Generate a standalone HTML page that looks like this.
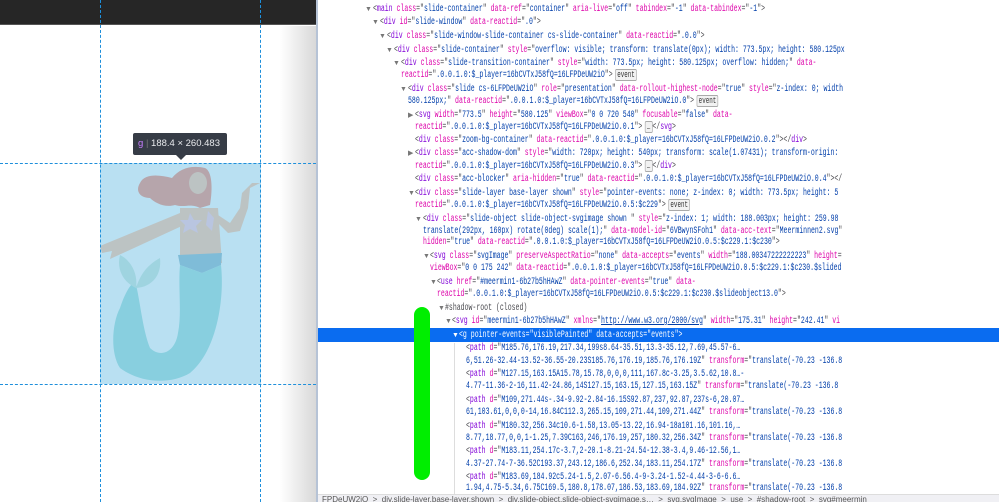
<!DOCTYPE html>
<html><head><meta charset="utf-8"><style>
*{margin:0;padding:0;box-sizing:border-box}
body{width:999px;height:502px;overflow:hidden;background:#fff;position:relative;font-family:"Liberation Sans",sans-serif}
#left{position:absolute;left:0;top:0;width:316px;height:502px;background:#fff;overflow:hidden}
#top{position:absolute;left:0;top:0;width:316px;height:25px;background:#262626;border-bottom:1px solid #555}
#grad{position:absolute;left:280px;top:26px;width:36px;height:476px;background:linear-gradient(to right,rgba(255,255,255,0),#d8d8d8)}
.vd{position:absolute;top:0;width:0;height:502px;border-left:1px dashed #1e8fdb}
.hd{position:absolute;left:0;width:316px;height:0;border-top:1px dashed #1e8fdb}
#box{position:absolute;left:100px;top:163px;width:161px;height:221px;background:#b9e0f2}
#tip{position:absolute;left:133px;top:133px;width:94px;height:22px;background:#363c46;border-radius:2px;color:#e8eaed;font-size:9.5px;line-height:22px;padding-left:5px;white-space:nowrap}
#tip:after{content:"";position:absolute;left:43px;top:22px;border:5px solid transparent;border-top-color:#363c46}
#sep{position:absolute;left:316px;top:0;width:2px;height:502px;background:#b6c3d6}
#right{position:absolute;left:318px;top:0;width:681px;height:494px;overflow:hidden;background:#fff}
#hl{position:absolute;left:0;top:328px;width:681px;height:14px;background:#0a6cf0}
#guide{position:absolute;left:136px;top:343px;width:1px;height:151px;background:#ddd}
#green{position:absolute;left:96px;top:307px;width:16px;height:173px;background:#00ee00;border-radius:8px}
.l{position:absolute;white-space:pre;font-family:"Liberation Mono",monospace;font-size:10px;line-height:13px;height:13px;transform:scaleX(0.653);transform-origin:0 0;color:#4a4a4f}
.t{color:#8000d7}.a{color:#dd00a9}.v{color:#003eaa}
.ar{position:absolute;font-size:7px;color:#777;line-height:13px}
.ev{display:inline-block;border:1px solid #aaa;border-radius:2px;background:#f2f2f2;color:#333;font-size:9px;line-height:10px;padding:0 2px;margin-left:4px}
.hl{color:#fff}.hl .t,.hl .a,.hl .v{color:#fff}
#bot{position:absolute;left:318px;top:494px;width:681px;height:8px;background:#f0f0f4;border-top:1px solid #ddd;font-size:8px;color:#555;white-space:pre;overflow:hidden;line-height:10px;padding-left:4px}
</style></head><body>
<div id="left">
<div id="top"></div>
<div id="grad"></div>
<div id="box"></div>
<svg style="position:absolute;left:100px;top:163px" width="161" height="221" viewBox="0 0 161 221">
<path d="M80 50 L0 83 L2 90 L12 88 L10 96 L84 62Z" fill="#bcc3c3"/>
<path d="M112 48 L130 60 L140 45 L142 30 L152 20 L160 20 L150 25 L148 45 L140 68 L128 70 L118 60Z" fill="#bcc3c3"/>
<path d="M80 45 L118 45 L122 100 L80 100Z" fill="#bcc3c3"/>
<path d="M40 20 C45 10 60 12 72 15 C80 5 92 2 105 5 C112 8 113 25 110 42 L100 45 C90 40 85 45 75 42 C65 45 55 40 50 35 C40 35 35 28 40 20Z" fill="#b6a5ab"/>
<ellipse cx="98" cy="20" rx="9" ry="11" fill="#bcc3c3"/>
<path d="M90 50 L94 57 L102 57 L96 63 L98 70 L90 66 L83 70 L85 62 L80 57 L88 57Z" fill="#b9c5e0"/>
<path d="M108 48 L114 55 L112 68 L106 62Z" fill="#b9c5e0"/>
<path d="M78 92 L122 90 L121 102 L102 110 L80 102Z" fill="#7fbcd8"/>
<path d="M80 102 L102 110 L121 102 C125 140 115 190 90 210 C70 222 40 220 20 205 C10 190 12 160 20 145 C25 130 30 122 35 118 C40 135 42 165 50 185 C60 195 75 190 78 170 C82 150 78 125 80 102Z" fill="#88cfdf"/>
<path d="M20 92 C32 98 38 112 36 125 C25 120 16 108 20 92Z" fill="#9fd4e0"/>
<path d="M60 95 C62 112 52 124 36 125 C40 112 47 102 60 95Z" fill="#9fd4e0"/>
</svg>
<div class="vd" style="left:100px"></div>
<div class="vd" style="left:260px"></div>
<div class="hd" style="top:163px"></div>
<div class="hd" style="top:384px"></div>
<div id="tip"><span style="color:#c77dff">g</span> <span style="color:#777">|</span> 188.4 × 260.483</div>
</div>
<div id="sep"></div>
<div id="right">
<div id="hl"></div>
<div id="guide"></div>
<span class="ar" style="left:47px;top:3px">▼</span>
<div class="l" style="left:55px;top:3px">&lt;<span class="t">main</span> <span class="a">class</span>="<span class="v">slide-container</span>" <span class="a">data-ref</span>="<span class="v">container</span>" <span class="a">aria-live</span>="<span class="v">off</span>" <span class="a">tabindex</span>="<span class="v">-1</span>" <span class="a">data-tabindex</span>="<span class="v">-1</span>"&gt;</div>
<span class="ar" style="left:54px;top:16px">▼</span>
<div class="l" style="left:62px;top:16px">&lt;<span class="t">div</span> <span class="a">id</span>="<span class="v">slide-window</span>" <span class="a">data-reactid</span>="<span class="v">.0</span>"&gt;</div>
<span class="ar" style="left:61px;top:30px">▼</span>
<div class="l" style="left:69px;top:30px">&lt;<span class="t">div</span> <span class="a">class</span>="<span class="v">slide-window-slide-container cs-slide-container</span>" <span class="a">data-reactid</span>="<span class="v">.0.0</span>"&gt;</div>
<span class="ar" style="left:68px;top:44px">▼</span>
<div class="l" style="left:76px;top:44px">&lt;<span class="t">div</span> <span class="a">class</span>="<span class="v">slide-container</span>" <span class="a">style</span>="<span class="v">overflow: visible; transform: translate(0px); width: 773.5px; height: 580.125px</span></div>
<span class="ar" style="left:75px;top:57px">▼</span>
<div class="l" style="left:83px;top:57px">&lt;<span class="t">div</span> <span class="a">class</span>="<span class="v">slide-transition-container</span>" <span class="a">style</span>="<span class="v">width: 773.5px; height: 580.125px; overflow: hidden;</span>" <span class="a">data-</span></div>
<div class="l" style="left:83px;top:69px"><span class="a">reactid</span>="<span class="v">.0.0.1.0:$_player=16bCVTxJ58fQ=16LFPDeUW2iO</span>"&gt;<span class="ev">event</span></div>
<span class="ar" style="left:82px;top:83px">▼</span>
<div class="l" style="left:90px;top:83px">&lt;<span class="t">div</span> <span class="a">class</span>="<span class="v">slide cs-6LFPDeUW2iO</span>" <span class="a">role</span>="<span class="v">presentation</span>" <span class="a">data-rollout-highest-node</span>="<span class="v">true</span>" <span class="a">style</span>="<span class="v">z-index: 0; width</span></div>
<div class="l" style="left:90px;top:95px"><span class="v">580.125px;</span>" <span class="a">data-reactid</span>="<span class="v">.0.0.1.0:$_player=16bCVTxJ58fQ=16LFPDeUW2iO.0</span>"&gt;<span class="ev">event</span></div>
<span class="ar" style="left:90px;top:109px">▶</span>
<div class="l" style="left:97px;top:109px">&lt;<span class="t">svg</span> <span class="a">width</span>="<span class="v">773.5</span>" <span class="a">height</span>="<span class="v">580.125</span>" <span class="a">viewBox</span>="<span class="v">0 0 720 540</span>" <span class="a">focusable</span>="<span class="v">false</span>" <span class="a">data-</span></div>
<div class="l" style="left:97px;top:121px"><span class="a">reactid</span>="<span class="v">.0.0.1.0:$_player=16bCVTxJ58fQ=16LFPDeUW2iO.0.1</span>"&gt;<span class="ev">…</span>&lt;/<span class="t">svg</span>&gt;</div>
<div class="l" style="left:97px;top:134px">&lt;<span class="t">div</span> <span class="a">class</span>="<span class="v">zoom-bg-container</span>" <span class="a">data-reactid</span>="<span class="v">.0.0.1.0:$_player=16bCVTxJ58fQ=16LFPDeUW2iO.0.2</span>"&gt;&lt;/<span class="t">div</span>&gt;</div>
<span class="ar" style="left:90px;top:147px">▶</span>
<div class="l" style="left:97px;top:147px">&lt;<span class="t">div</span> <span class="a">class</span>="<span class="v">acc-shadow-dom</span>" <span class="a">style</span>="<span class="v">width: 720px; height: 540px; transform: scale(1.07431); transform-origin:</span></div>
<div class="l" style="left:97px;top:160px"><span class="a">reactid</span>="<span class="v">.0.0.1.0:$_player=16bCVTxJ58fQ=16LFPDeUW2iO.0.3</span>"&gt;<span class="ev">…</span>&lt;/<span class="t">div</span>&gt;</div>
<div class="l" style="left:97px;top:173px">&lt;<span class="t">div</span> <span class="a">class</span>="<span class="v">acc-blocker</span>" <span class="a">aria-hidden</span>="<span class="v">true</span>" <span class="a">data-reactid</span>="<span class="v">.0.0.1.0:$_player=16bCVTxJ58fQ=16LFPDeUW2iO.0.4</span>"&gt;&lt;/</div>
<span class="ar" style="left:90px;top:187px">▼</span>
<div class="l" style="left:97px;top:187px">&lt;<span class="t">div</span> <span class="a">class</span>="<span class="v">slide-layer base-layer shown</span>" <span class="a">style</span>="<span class="v">pointer-events: none; z-index: 0; width: 773.5px; height: 5</span></div>
<div class="l" style="left:97px;top:199px"><span class="a">reactid</span>="<span class="v">.0.0.1.0:$_player=16bCVTxJ58fQ=16LFPDeUW2iO.0.5:$c229</span>"&gt;<span class="ev">event</span></div>
<span class="ar" style="left:97px;top:213px">▼</span>
<div class="l" style="left:105px;top:213px">&lt;<span class="t">div</span> <span class="a">class</span>="<span class="v">slide-object slide-object-svgimage shown </span>" <span class="a">style</span>="<span class="v">z-index: 1; width: 188.003px; height: 259.98</span></div>
<div class="l" style="left:105px;top:225px"><span class="v">translate(292px, 160px) rotate(0deg) scale(1);</span>" <span class="a">data-model-id</span>="<span class="v">6VBwynSFoh1</span>" <span class="a">data-acc-text</span>="<span class="v">Meerminnen2.svg</span>"</div>
<div class="l" style="left:105px;top:236px"><span class="a">hidden</span>="<span class="v">true</span>" <span class="a">data-reactid</span>="<span class="v">.0.0.1.0:$_player=16bCVTxJ58fQ=16LFPDeUW2iO.0.5:$c229.1:$c230</span>"&gt;</div>
<span class="ar" style="left:105px;top:250px">▼</span>
<div class="l" style="left:112px;top:250px">&lt;<span class="t">svg</span> <span class="a">class</span>="<span class="v">svgImage</span>" <span class="a">preserveAspectRatio</span>="<span class="v">none</span>" <span class="a">data-accepts</span>="<span class="v">events</span>" <span class="a">width</span>="<span class="v">188.00347222222223</span>" <span class="a">height</span>=</div>
<div class="l" style="left:112px;top:262px"><span class="a">viewBox</span>="<span class="v">0 0 175 242</span>" <span class="a">data-reactid</span>="<span class="v">.0.0.1.0:$_player=16bCVTxJ58fQ=16LFPDeUW2iO.0.5:$c229.1:$c230.$slided</span></div>
<span class="ar" style="left:112px;top:276px">▼</span>
<div class="l" style="left:119px;top:276px">&lt;<span class="t">use</span> <span class="a">href</span>="<span class="v">#meermin1-6b27b5hHAwZ</span>" <span class="a">data-pointer-events</span>="<span class="v">true</span>" <span class="a">data-</span></div>
<div class="l" style="left:119px;top:288px"><span class="a">reactid</span>="<span class="v">.0.0.1.0:$_player=16bCVTxJ58fQ=16LFPDeUW2iO.0.5:$c229.1:$c230.$slideobject13.0</span>"&gt;</div>
<span class="ar" style="left:120px;top:302px">▼</span>
<div class="l" style="left:127px;top:302px">#shadow-root (closed)</div>
<span class="ar" style="left:127px;top:315px">▼</span>
<div class="l" style="left:134px;top:315px">&lt;<span class="t">svg</span> <span class="a">id</span>="<span class="v">meermin1-6b27b5hHAwZ</span>" <span class="a">xmlns</span>="<span class="v" style="text-decoration:underline">http://www.w3.org/2000/svg</span>" <span class="a">width</span>="<span class="v">175.31</span>" <span class="a">height</span>="<span class="v">242.41</span>" <span class="a">vi</span></div>
<span class="ar" style="left:134px;top:329px;color:#fff">▼</span>
<div class="l hl" style="left:141px;top:329px">&lt;<span class="t">g</span> <span class="a">pointer-events</span>="<span class="v">visiblePainted</span>" <span class="a">data-accepts</span>="<span class="v">events</span>"&gt;</div>
<div class="l" style="left:148px;top:342px">&lt;<span class="t">path</span> <span class="a">d</span>="<span class="v">M185.76,176.19,217.34,199s8.64-35.51,13.3-35.12,7.69,45.57-6…</span></div>
<div class="l" style="left:148px;top:355px"><span class="v">6,51.26-32.44-13.52-36.55-20.23S185.76,176.19,185.76,176.19Z</span>" <span class="a">transform</span>="<span class="v">translate(-70.23 -136.8</span></div>
<div class="l" style="left:148px;top:368px">&lt;<span class="t">path</span> <span class="a">d</span>="<span class="v">M127.15,163.15A15.78,15.78,0,0,0,111,167.8c-3.25,3.5.62,10.8…-</span></div>
<div class="l" style="left:148px;top:380px"><span class="v">4.77-11.36-2-16,11.42-24.86,14S127.15,163.15,127.15,163.15Z</span>" <span class="a">transform</span>="<span class="v">translate(-70.23 -136.8</span></div>
<div class="l" style="left:148px;top:394px">&lt;<span class="t">path</span> <span class="a">d</span>="<span class="v">M109,271.44s-.34-9.92-2.84-16.15S92.87,237,92.87,237s-6,20.07…</span></div>
<div class="l" style="left:148px;top:406px"><span class="v">61,103.61,0,0,0-14,16.84C112.3,265.15,109,271.44,109,271.44Z</span>" <span class="a">transform</span>="<span class="v">translate(-70.23 -136.8</span></div>
<div class="l" style="left:148px;top:420px">&lt;<span class="t">path</span> <span class="a">d</span>="<span class="v">M180.32,256.34c10.6-1.58,13.05-13.22,16.94-18a101.16,101.16,…</span></div>
<div class="l" style="left:148px;top:432px"><span class="v">8.77,18.77,0,0,1-1.25,7.39C163,246,176.19,257,180.32,256.34Z</span>" <span class="a">transform</span>="<span class="v">translate(-70.23 -136.8</span></div>
<div class="l" style="left:148px;top:445px">&lt;<span class="t">path</span> <span class="a">d</span>="<span class="v">M183.11,254.17c-3.7,2-20.1-8.21-24.54-12.38-3.4,9.46-12.56,1…</span></div>
<div class="l" style="left:148px;top:458px"><span class="v">4.37-27.74-7-36.52C193.37,243.12,186.6,252.34,183.11,254.17Z</span>" <span class="a">transform</span>="<span class="v">translate(-70.23 -136.8</span></div>
<div class="l" style="left:148px;top:471px">&lt;<span class="t">path</span> <span class="a">d</span>="<span class="v">M183.69,184.92c5.24-1.5,2.07-6.56.4-9-3.24-1.52-4.44-3-6-6.6…</span></div>
<div class="l" style="left:148px;top:482px"><span class="v">1.94,4.75-5.34,6.75C169.5,180.8,178.07,186.53,183.69,184.92Z</span>" <span class="a">transform</span>="<span class="v">translate(-70.23 -136.8</span></div>
<div id="green"></div>
</div>
<div id="bot">FPDeUW2iO  &gt;  div.slide-layer.base-layer.shown  &gt;  div.slide-object.slide-object-svgimage.s…  &gt;  svg.svgImage  &gt;  use  &gt;  #shadow-root  &gt;  svg#meermin</div>
</body></html>
